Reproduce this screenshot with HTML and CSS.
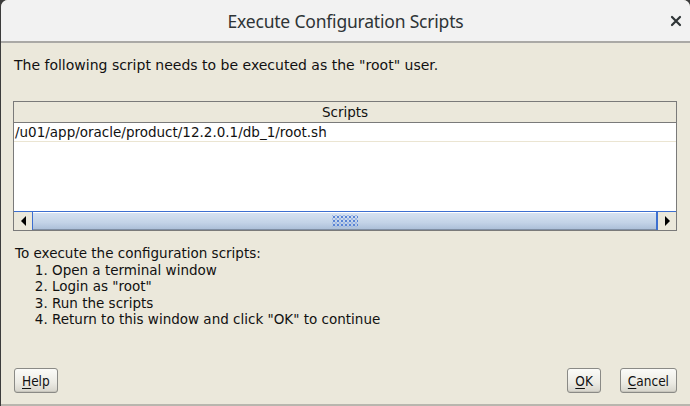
FILE: index.html
```html
<!DOCTYPE html>
<html lang="en">
<head>
    <meta charset="UTF-8">
    <title>Execute Configuration Scripts</title>
    <link rel="stylesheet" href="styles.css">
</head>
<body>
    <div class="dialog">
        <!-- Pealkirja riba -->
        <div class="titlebar">
            <span class="title">Execute Configuration Scripts</span>
            <svg class="close" width="12" height="12" viewBox="0 0 12 12">
                <path d="M2 2 L10 10 M10 2 L2 10" stroke="#2e3436" stroke-width="2.2" stroke-linecap="round"/>
            </svg>
        </div>

        <div class="content">
            <p class="intro">The following script needs to be executed as the "root" user.</p>

            <div class="table">
                <div class="table-head">Scripts</div>
                <div class="table-body">
                    <div class="row">/u01/app/oracle/product/12.2.0.1/db_1/root.sh</div>
                </div>
                <div class="hscroll">
                    <div class="arrow-btn"><span class="tri-left"></span></div>
                    <div class="thumb"><span class="grip"></span></div>
                    <div class="arrow-btn"><span class="tri-right"></span></div>
                </div>
            </div>

            <div class="steps">
                <div>To execute the configuration scripts:</div>
                <ol>
                    <li>Open a terminal window</li>
                    <li>Login as "root"</li>
                    <li>Run the scripts</li>
                    <li>Return to this window and click "OK" to continue</li>
                </ol>
            </div>
        </div>

        <div class="buttons">
            <button><u>H</u>elp</button>
            <div class="right-buttons">
                <button><u>O</u>K</button>
                <button><u>C</u>ancel</button>
            </div>
        </div>
    </div>
</body>
</html>
```

FILE: styles.css
```css
html, body {
    margin: 0;
    padding: 0;
    height: 100%;
    background: #3c3c3c;
}
body {
    font-family: "DejaVu Sans", sans-serif;
    font-size: 13.5px;
    color: #111;
}
.dialog {
    height: 404px;
    width: 689px;
    margin-left: 1px;
    background: #ebe8db;
    border-radius: 7px 7px 0 0;
    display: flex;
    flex-direction: column;
    border-bottom: 2px solid #b8b6ae;
}
.titlebar {
    height: 41px;
    background: #f2f2f2;
    border-radius: 7px 7px 0 0;
    border-bottom: 2px solid #aaa9a6;
    display: flex;
    align-items: center;
    justify-content: center;
    position: relative;
}
.title {
    font-family: "Noto Sans", sans-serif;
    font-size: 17.5px;
    color: #2e3436;
    letter-spacing: -0.2px;
}
.close {
    position: absolute;
    right: 8px;
    top: 15px;
}
.content {
    padding: 0 12px 0 12px;
    flex: 1;
}
.intro {
    margin: 14px 0 0 1px;
    line-height: 17px;
    font-size: 14px;
}
.table {
    margin-top: 27px;
    width: 662px;
    border: 1px solid #7a7a7a;
    background: #fff;
}
.table-head {
    height: 20px;
    line-height: 21px;
    text-align: center;
    background: #ebe8db;
    border-bottom: 1px solid #7a7a7a;
}
.table-body {
    height: 88px;
}
.row {
    height: 18px;
    line-height: 18px;
    border-bottom: 1px solid #ebe5d2;
    padding-left: 1px;
}
.hscroll {
    height: 18px;
    display: flex;
    border-top: 1px solid #3d6fd0;
}
.arrow-btn {
    width: 18px;
    background: #ebe8db;
    display: flex;
    align-items: center;
    justify-content: center;
    border-right: 1px solid #3d6fd0;
}
.arrow-btn:last-child {
    border-right: none;
    border-left: 2px solid #3d6fd0;
}
.tri-left {
    border-top: 5px solid transparent;
    border-bottom: 5px solid transparent;
    border-right: 5px solid #000;
}
.tri-right {
    border-top: 5px solid transparent;
    border-bottom: 5px solid transparent;
    border-left: 5px solid #000;
}
.thumb {
    flex: 1;
    background: linear-gradient(#d6e2f1, #c3d3e7 60%, #adc0d9);
    border-top: 1px solid #ffffff;
    border-bottom: 1px solid #7f8ea3;
    display: flex;
    align-items: center;
    justify-content: center;
}
.grip {
    width: 26px;
    height: 12px;
    background-image:
        radial-gradient(circle, #5a84d6 0.9px, transparent 1.3px),
        radial-gradient(circle, #9fb8e6 0.9px, transparent 1.3px);
    background-size: 4px 4px;
    background-position: 0 0, 2px 2px;
}
.steps {
    margin-top: 14px;
    margin-left: 2px;
    line-height: 16.6px;
}
.steps ol {
    margin: 0;
    padding-left: 37px;
}
.buttons {
    height: 36px;
    padding: 0 13px 0 13px;
    display: flex;
    justify-content: space-between;
    align-items: flex-start;
}
.right-buttons {
    display: flex;
    gap: 19px;
}
button {
    font-family: "DejaVu Sans Condensed", "DejaVu Sans", sans-serif;
    font-size: 13.5px;
    color: #111;
    height: 25px;
    padding: 0 7px;
    border: 1px solid #8a8a86;
    border-radius: 3px;
    background: linear-gradient(#fbfbf8, #ecebe4 60%, #d6d4cb);
    box-shadow: inset 0 -1px 0 #c8c6bd;
}
button u {
    text-underline-offset: 2px;
}
```
